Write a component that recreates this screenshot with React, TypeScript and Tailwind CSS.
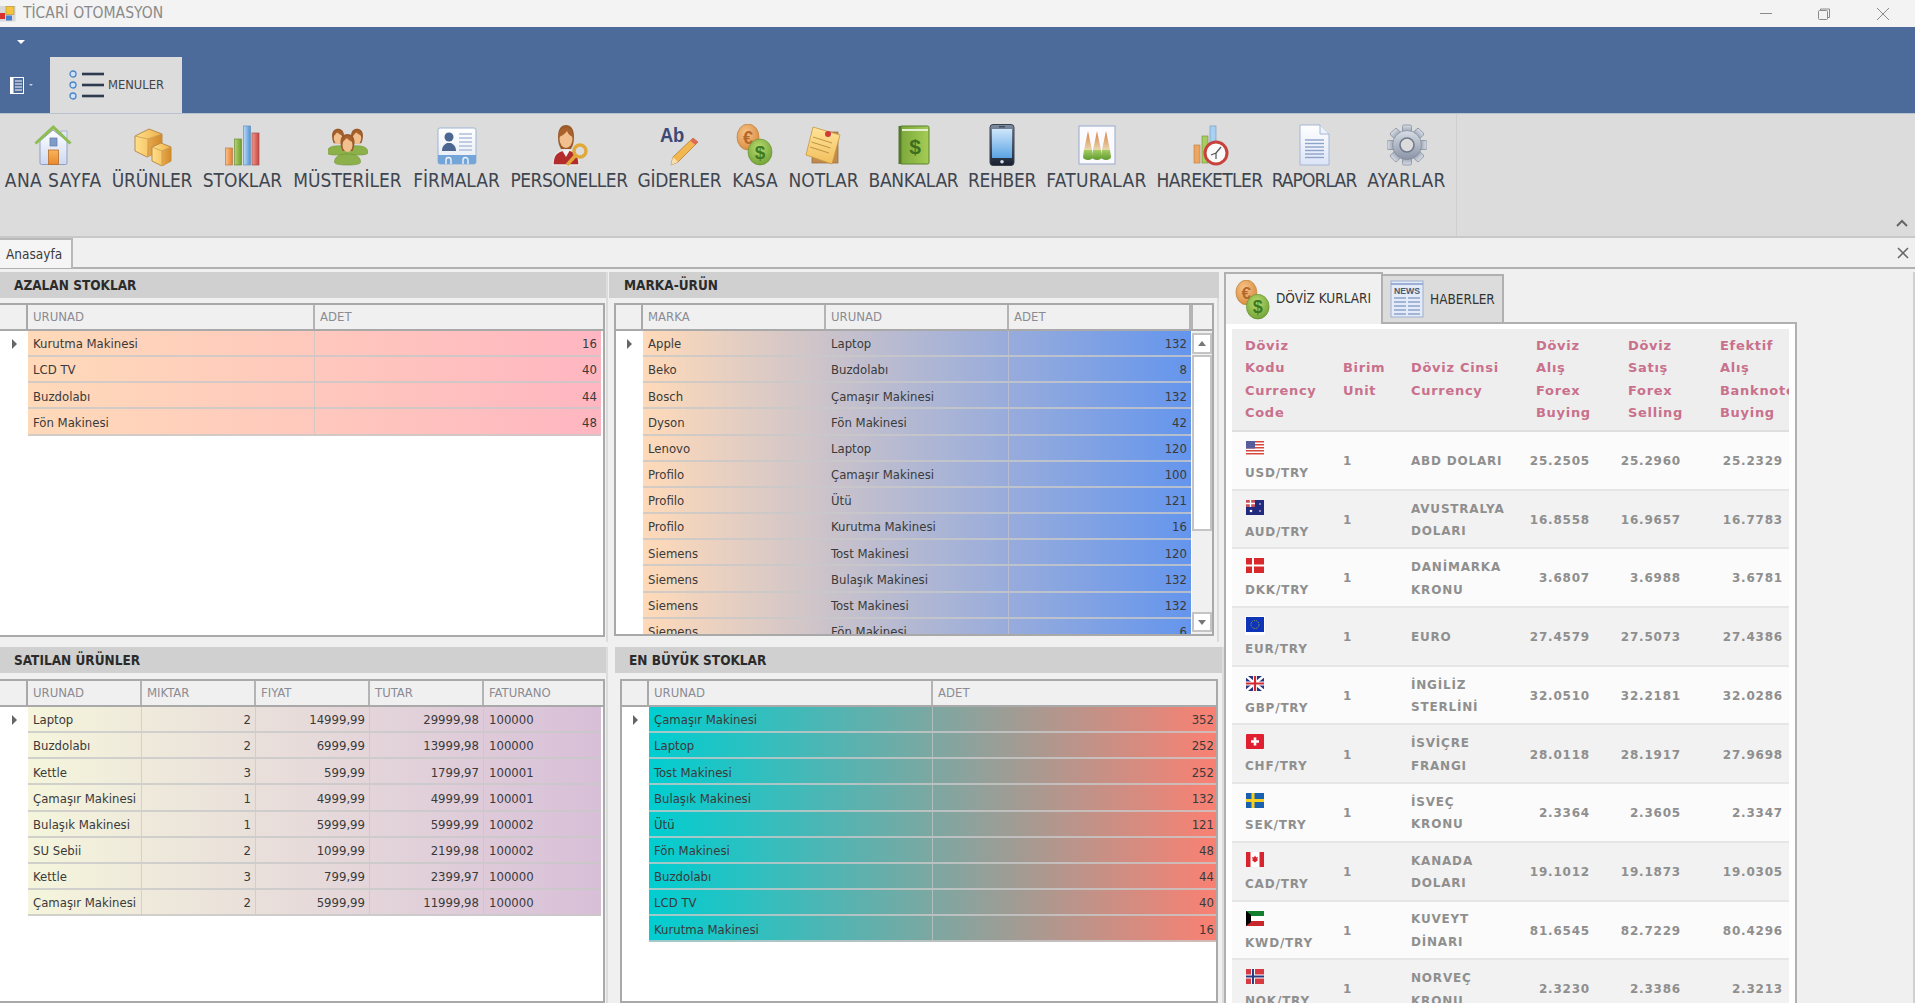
import { ReactNode } from "react";

type Column = { label: string; width: string; right?: boolean };

function Doc({ children, w = 40, h = 42, box = "0 0 40 42", className = "" }: { children: ReactNode; w?: number; h?: number; box?: string; className?: string }) {
  return (
    <svg width={w} height={h} viewBox={box} className={`shrink-0 ${className}`}>
      {children}
    </svg>
  );
}

function Grad({ id, a, b, x = false }: { id: string; a: string; b: string; x?: boolean }) {
  return (
    <linearGradient id={id} x1="0" y1="0" x2={x ? "1" : "0"} y2={x ? "0" : "1"}>
      <stop offset="0" stopColor={a} />
      <stop offset="1" stopColor={b} />
    </linearGradient>
  );
}

function HomeIcon() {
  return (
    <Doc>
      <defs>
        <Grad id="h1" a="#ffffff" b="#cdd8f0" />
        <Grad id="h2" a="#f8b45c" b="#e98a2c" />
      </defs>
      <rect x="28" y="7" width="6" height="12" fill="#dfe6f6" stroke="#a9b6d4" />
      <path d="M7 17 20 6l14 11v22a1.5 1.5 0 0 1-1.5 1.5h-24A1.5 1.5 0 0 1 7 39z" fill="url(#h1)" stroke="#8f9fc4" />
      <rect x="17" y="14" width="7" height="8" fill="#7f9bc8" stroke="#5f78a6" strokeWidth=".7" />
      <rect x="15.5" y="26" width="10" height="14.5" fill="url(#h2)" stroke="#b96c28" strokeWidth=".8" />
      <path d="M2.5 19.5 20.3 3l17.2 16.5" fill="none" stroke="#8fbd51" strokeWidth="3" />
    </Doc>
  );
}

function BoxesIcon() {
  return (
    <Doc>
      <defs>
        <Grad id="b1" a="#ffe08a" b="#eeb04a" x />
        <Grad id="b2" a="#e9a94a" b="#d08a2c" x />
      </defs>
      <path d="M3 12 17 5l13 5v16l-15 7-12-6z" fill="url(#b1)" stroke="#b98a4c" />
      <path d="M16 15 30 10v16l-15 7z" fill="url(#b2)" />
      <path d="M3 12l13 3 14-5M16 15v18" fill="none" stroke="#c99a55" strokeWidth=".8" />
      <path d="M20 23l9-4 10 4v14l-9 5-10-5z" fill="url(#b1)" stroke="#b98a4c" />
      <path d="M30 27l9-4v14l-9 5z" fill="url(#b2)" />
      <path d="M20 23l10 4 9-4M30 27v15" fill="none" stroke="#c99a55" strokeWidth=".8" />
    </Doc>
  );
}

function BarsIcon() {
  return (
    <Doc>
      <defs>
        <Grad id="s1" a="#fbc08a" b="#e2802e" x />
        <Grad id="s2" a="#b4d66f" b="#6e9c2f" x />
        <Grad id="s3" a="#bcdcf6" b="#4d92d4" x />
        <Grad id="s4" a="#ef9a90" b="#c8453e" x />
      </defs>
      <rect x="2.5" y="24" width="7" height="17" fill="url(#s1)" stroke="#b77d4c" strokeWidth=".7" />
      <rect x="11.5" y="15" width="7" height="26" fill="url(#s2)" stroke="#6f8d3f" strokeWidth=".7" />
      <rect x="20.5" y="2" width="7" height="39" fill="url(#s3)" stroke="#6a8fb8" strokeWidth=".7" />
      <rect x="29" y="9" width="7" height="32" fill="url(#s4)" stroke="#a65050" strokeWidth=".7" />
    </Doc>
  );
}

function Person({ x, y, s = 1 }: { x: number; y: number; s?: number }) {
  return (
    <g transform={`translate(${x} ${y}) scale(${s})`}>
      <path d="M-13 23c0-6 6-8 13-8s13 2 13 8c0 2-4 3-13 3s-13-1-13-3z" fill="#8db14a" stroke="#6f9137" strokeWidth=".6" />
      <path d="M-7 3c0-5 3-8 7-8s7 3 7 8c0 4-1 7-2 9H-5c-1-2-2-5-2-9z" fill="#9a5a2a" />
      <ellipse cx="0" cy="6" rx="5" ry="7" fill="#f1c08e" />
      <path d="M-5 3c2-1 3-3 4-4 2 2 4 3 6 4 0-5-2-6-5-6s-5 2-5 6z" fill="#a9622c" />
    </g>
  );
}

function PeopleIcon() {
  return (
    <Doc>
      <Person x={10} y={9} s={0.85} />
      <Person x={29} y={9} s={0.85} />
      <Person x={19.5} y={15} />
    </Doc>
  );
}

function CardIcon() {
  return (
    <Doc>
      <defs>
        <Grad id="c1" a="#ffffff" b="#e4eaf6" />
      </defs>
      <rect x="1" y="4" width="38" height="36" rx="2" fill="url(#c1)" stroke="#9db3d4" />
      <path d="M1 31h38v7a2 2 0 0 1-2 2H3a2 2 0 0 1-2-2z" fill="#73a5d8" />
      <circle cx="12" cy="13" r="4.5" fill="#4b668f" />
      <path d="M5 27c0-5 3-7 5-8h4c2 1 5 3 5 8z" fill="#4b668f" />
      <path d="M22 10h13M22 14h13M22 18h13M22 22h13M22 26h13" stroke="#b0bfd8" strokeWidth="1.4" />
      <path d="M9 40v-4a2.5 2.5 0 0 1 5 0v4M26 40v-4a2.5 2.5 0 0 1 5 0v4" fill="none" stroke="#eef3fb" strokeWidth="1.4" />
    </Doc>
  );
}

function StaffIcon() {
  return (
    <Doc>
      <path d="M4 41c0-10 3-13 11-15h5c7 2 10 5 10 15z" fill="#b32d2d" stroke="#e8e8e8" strokeWidth="1.4" />
      <path d="M13 26l4 7 4-7z" fill="#f2f2f2" />
      <path d="M9 13C9 5 12 1 17 1s8 4 8 12c0 5-1 9-3 12H12c-2-3-3-7-3-12z" fill="#9a5a2a" />
      <ellipse cx="17" cy="15" rx="6.5" ry="9" fill="#f1c08e" />
      <path d="M10 13c3-1 6-3 8-6 1 3 3 5 6 6 0-6-2-9-7-9s-7 3-7 9z" fill="#a9622c" />
      <circle cx="31" cy="27" r="6" fill="none" stroke="#e0a93a" strokeWidth="3.4" />
      <path d="M27 31 18 41" stroke="#e0a93a" strokeWidth="3.4" />
    </Doc>
  );
}

function AbIcon() {
  return (
    <Doc>
      <text x="0" y="18" fontFamily="'Liberation Sans', sans-serif" fontWeight="700" fontSize="21" fill="#3b4a75" textLength="24" lengthAdjust="spacingAndGlyphs">Ab</text>
      <path d="M33 14 38 18 18 38l-7 3 2-8z" fill="#f2b84f" stroke="#a9752b" strokeWidth=".7" />
      <path d="M33 14 38 18 35.5 21 30.5 17z" fill="#e0685a" />
      <path d="M13 33l5 5-7 3z" fill="#f7dfb4" />
    </Doc>
  );
}

function CoinsIcon({ w = 40, h = 42 }: { w?: number; h?: number }) {
  return (
    <Doc w={w} h={h}>
      <defs>
        <radialGradient id="k1" cx=".4" cy=".35" r=".7">
          <stop offset="0" stopColor="#f8c58c" />
          <stop offset="1" stopColor="#d78a3c" />
        </radialGradient>
        <radialGradient id="k2" cx=".45" cy=".35" r=".7">
          <stop offset="0" stopColor="#b9dc70" />
          <stop offset="1" stopColor="#6fa033" />
        </radialGradient>
      </defs>
      <ellipse cx="13" cy="13" rx="11" ry="13" fill="url(#k1)" stroke="#b8762f" strokeWidth=".6" />
      <text x="13" y="20" textAnchor="middle" fontFamily="'Liberation Sans', sans-serif" fontWeight="700" fontSize="18" fill="#b4682a">€</text>
      <ellipse cx="25" cy="28" rx="12" ry="13" fill="url(#k2)" stroke="#5f8c2e" strokeWidth=".6" />
      <text x="25" y="35" textAnchor="middle" fontFamily="'Liberation Sans', sans-serif" fontWeight="700" fontSize="19" fill="#3f7a22">$</text>
    </Doc>
  );
}

function NotesIcon() {
  return (
    <Doc>
      <defs>
        <Grad id="n1" a="#ffe49a" b="#f2bf5c" />
      </defs>
      <rect x="8" y="8" width="26" height="31" fill="#bf8b4e" stroke="#94683a" strokeWidth=".7" />
      <path d="M9 3 36 11 28 40 2 31z" fill="url(#n1)" stroke="#c8953f" strokeWidth=".8" />
      <path d="M9 13l19 6M7.500 18l19 6M6 23l19 6" stroke="#b98c3e" strokeWidth=".9" />
      <circle cx="24" cy="10" r="3" fill="#d23a3a" />
    </Doc>
  );
}

function BookIcon() {
  return (
    <Doc>
      <defs>
        <Grad id="g1" a="#7aa83a" b="#a5cc55" x />
      </defs>
      <rect x="6" y="2" width="29" height="38" rx="1.500" fill="url(#g1)" stroke="#5d8030" />
      <path d="M8 6h26" stroke="#e4eed2" strokeWidth="2" />
      <path d="M6 2v38" stroke="#55782a" strokeWidth="3" />
      <text x="21" y="30" textAnchor="middle" fontFamily="'Liberation Sans', sans-serif" fontWeight="700" fontSize="21" fill="#3f6e1f">$</text>
    </Doc>
  );
}

function PhoneIcon() {
  return (
    <Doc>
      <defs>
        <Grad id="p1" a="#7d8ba0" b="#18202e" />
        <Grad id="p2" a="#cfe6fa" b="#5ba4e4" />
      </defs>
      <rect x="8" y="0.500" width="24" height="41" rx="3" fill="url(#p1)" stroke="#3a4250" />
      <rect x="10" y="5" width="20" height="29" fill="url(#p2)" />
      <path d="M17 2.800h6" stroke="#2b3342" strokeWidth="1" />
      <circle cx="20" cy="37.800" r="1.800" fill="#d8dde4" />
    </Doc>
  );
}

function InvoiceIcon() {
  return (
    <Doc>
      <defs>
        <Grad id="i1" a="#d97b3c" b="#e8d8b0" />
        <Grad id="i2" a="#a4cd62" b="#5f9b2f" />
      </defs>
      <rect x="2" y="2" width="36" height="38" fill="#fbfbff" stroke="#a6b4d2" strokeWidth="1.200" />
      {[11, 20, 29].map((x) => (
        <g key={x}>
          <path d={`M${x} 7 ${x - 4} 26h8z`} fill="url(#i1)" />
          <path d={`M${x - 4} 26h8l1 7a5 3 0 0 1-10 0z`} fill="url(#i2)" />
        </g>
      ))}
    </Doc>
  );
}

function ActivityIcon() {
  return (
    <Doc>
      <rect x="4" y="21" width="6" height="18" fill="#eda660" stroke="#b87a3c" strokeWidth=".6" />
      <rect x="12" y="12" width="6" height="27" fill="#a6cc62" stroke="#6f8f38" strokeWidth=".6" />
      <rect x="20" y="2" width="6" height="22" fill="#a8d0f2" stroke="#6c95bd" strokeWidth=".6" />
      <circle cx="26" cy="29" r="11" fill="#fafafa" stroke="#c8423c" strokeWidth="3" />
      <path d="M26 29l5-6M26 29l-5 2M26 29v6" stroke="#555" strokeWidth="1.200" fill="none" />
    </Doc>
  );
}

function PageIcon() {
  return (
    <Doc>
      <defs>
        <Grad id="d1" a="#ffffff" b="#dbe4f6" />
      </defs>
      <path d="M6 1h20l9 9v31H6z" fill="url(#d1)" stroke="#a6b6d6" />
      <path d="M26 1v9h9" fill="#eef2fa" stroke="#a6b6d6" />
      {[16, 19.500, 23, 26.500, 30, 33.500].map((y) => (
        <path key={y} d={`M11 ${y}h19`} stroke="#8ea2ca" strokeWidth="1.400" />
      ))}
    </Doc>
  );
}

function GearIcon() {
  const teeth = [0, 45, 90, 135, 180, 225, 270, 315];
  return (
    <Doc>
      <defs>
        <Grad id="e1" a="#d8dde5" b="#8a94a5" />
      </defs>
      <g transform="translate(20 21)">
        {teeth.map((t) => (
          <rect key={t} x="-4.500" y="-20" width="9" height="9" rx="1.500" fill="url(#e1)" stroke="#7d8799" strokeWidth=".7" transform={`rotate(${t})`} />
        ))}
        <circle r="14.500" fill="url(#e1)" stroke="#7d8799" strokeWidth=".7" />
        <circle r="7" fill="#dcdcdc" stroke="#6f7a8c" strokeWidth="1.600" />
      </g>
    </Doc>
  );
}

function NewsIcon() {
  return (
    <Doc w={34} h={38} box="0 0 34 38">
      <rect x="1" y="1" width="32" height="36" fill="#e3eaf8" stroke="#9db0d2" />
      <path d="M1 4h32" stroke="#7f97c4" strokeWidth="1.400" />
      <text x="17" y="14" textAnchor="middle" fontFamily="'Liberation Sans', sans-serif" fontWeight="700" fontSize="9.500" fill="#4b5874" textLength="26" lengthAdjust="spacingAndGlyphs">NEWS</text>
      {[18, 22, 26, 30, 34].map((y) => (
        <path key={y} d={`M4 ${y}h12M18 ${y}h12`} stroke="#8ea2ca" strokeWidth="1.600" />
      ))}
    </Doc>
  );
}

function AppLogo() {
  return (
    <Doc w={16} h={17} box="0 0 16 17">
      <rect x="0" y="1" width="15.500" height="15.500" fill="#d8d8d8" />
      <rect x="6" y="1.500" width="8" height="8" fill="#f4c53c" stroke="#b8902a" strokeWidth=".6" />
      <rect x="0" y="8" width="5" height="6" fill="#d8322c" />
      <rect x="6" y="10.500" width="6" height="5" fill="#4a80d0" />
    </Doc>
  );
}

function MenuListIcon() {
  return (
    <Doc w={36} h={30} box="0 0 36 30">
      {[4, 15, 26].map((y) => (
        <g key={y}>
          <circle cx="4" cy={y} r="3" fill="#cfe2f8" stroke="#4b86c8" strokeWidth="1.300" />
          <path d={`M13 ${y}h22`} stroke="#2d3a4f" strokeWidth="2.600" />
        </g>
      ))}
    </Doc>
  );
}

// ribbon buttons keep the reference's uneven widths, the tracking makes up for the other typeface
const nav: [string, string, ReactNode][] = [
  ["ANA SAYFA", "w-[106.500px] tracking-[0.4px]", <HomeIcon />],
  ["ÜRÜNLER", "w-[91px] -tracking-[0.2px]", <BoxesIcon />],
  ["STOKLAR", "w-[90px]", <BarsIcon />],
  ["MÜSTERİLER", "w-[120px]", <PeopleIcon />],
  ["FİRMALAR", "w-[98px]", <CardIcon />],
  ["PERSONELLER", "w-[127px] -tracking-[0.5px]", <StaffIcon />],
  ["GİDERLER", "w-[94px] -tracking-[0.3px]", <AbIcon />],
  ["KASA", "w-[57px]", <CoinsIcon />],
  ["NOTLAR", "w-[80px]", <NotesIcon />],
  ["BANKALAR", "w-[100px] -tracking-[0.3px]", <BookIcon />],
  ["REHBER", "w-[77px] -tracking-[0.3px]", <PhoneIcon />],
  ["FATURALAR", "w-[112px] tracking-[0.3px]", <InvoiceIcon />],
  ["HAREKETLER", "w-[114px] -tracking-[0.6px]", <ActivityIcon />],
  ["RAPORLAR", "w-[95px] -tracking-[0.9px]", <PageIcon />],
  ["AYARLAR", "w-[90px] tracking-[0.3px]", <GearIcon />],
];

function DataGrid({
  columns,
  rows,
  gradient,
  indicator,
  scroll,
  className,
}: {
  columns: Column[];
  rows: string[][];
  gradient: string;
  indicator: string;
  scroll?: boolean;
  className?: string;
}) {
  return (
    <div className={`flex flex-col flex-1 min-h-0 bg-white border-2 border-t-2 border-[#a9a9a9] overflow-hidden ${className ?? ""}`}>
      <div className="flex h-[26px] shrink-0 bg-[#f0f0f0] border-b-2 border-[#a9a9a9] text-[#8b8b93]">
        <div className={`${indicator} shrink-0 border-r-2 border-[#a9a9a9]`} />
        {columns.map((c) => (
          <div key={c.label} className={`${c.width} shrink-0 pl-[5px] flex items-center border-r-2 border-[#b4b4b4] last:border-r-0`}>
            {c.label}
          </div>
        ))}
        {scroll && <div className="flex-1 border-l-2 border-[#b4b4b4]" />}
      </div>
      <div className="flex flex-1 min-h-0">
        <div className="min-w-0 overflow-hidden">
          {rows.map((r, i) => (
            <div key={i} className="flex h-[26.17px]">
              <div className={`${indicator} shrink-0 bg-white flex items-center justify-center`}>
                {i === 0 && <div className="w-0 h-0 border-y-[5px] border-y-transparent border-l-[5px] border-l-[#666]" />}
              </div>
              <div className={`flex border-b-2 border-[#c8c8c8]/80 bg-linear-to-r/srgb ${gradient}`}>
                {columns.map((c, j) => (
                  <div
                    key={c.label}
                    className={`${c.width} shrink-0 pl-[5px] pr-[4px] pt-[2px] flex items-center whitespace-nowrap overflow-hidden border-r border-[#c6c6c6]/70 last:border-r-0 ${c.right ? "justify-end" : ""}`}
                  >
                    {r[j]}
                  </div>
                ))}
              </div>
            </div>
          ))}
        </div>
        {scroll && (
          <div className="w-[20px] ml-[1px] shrink-0 flex flex-col bg-[#f0f0f0] py-[2px]">
            <div className="h-[21px] bg-white border-2 border-[#c4c4c4] flex items-center justify-center">
              <div className="w-0 h-0 border-x-[4px] border-x-transparent border-b-[5px] border-b-[#777]" />
            </div>
            <div className="h-[176px] mt-[1px] bg-white border-2 border-[#c4c4c4]" />
            <div className="flex-1" />
            <div className="h-[20px] bg-white border-2 border-[#c4c4c4] flex items-center justify-center">
              <div className="w-0 h-0 border-x-[4px] border-x-transparent border-t-[5px] border-t-[#777]" />
            </div>
          </div>
        )}
      </div>
    </div>
  );
}

function Panel({ title, className, titleClass, children }: { title: string; className: string; titleClass: string; children: ReactNode }) {
  return (
    <section className={`flex flex-col h-full ${className}`}>
      <h2 className={`h-[26px] shrink-0 bg-[#d0d0d0] flex items-center font-bold text-[13.500px] text-[#2b2b2b] ${titleClass}`}>{title}</h2>
      {children}
    </section>
  );
}

const azalan = [["Kurutma Makinesi", "16"], ["LCD TV", "40"], ["Buzdolabı", "44"], ["Fön Makinesi", "48"]];

const marka = [
  ["Apple", "Laptop", "132"],
  ["Beko", "Buzdolabı", "8"],
  ["Bosch", "Çamaşır Makinesi", "132"],
  ["Dyson", "Fön Makinesi", "42"],
  ["Lenovo", "Laptop", "120"],
  ["Profilo", "Çamaşır Makinesi", "100"],
  ["Profilo", "Ütü", "121"],
  ["Profilo", "Kurutma Makinesi", "16"],
  ["Siemens", "Tost Makinesi", "120"],
  ["Siemens", "Bulaşık Makinesi", "132"],
  ["Siemens", "Tost Makinesi", "132"],
  ["Siemens", "Fön Makinesi", "6"],
];

const satilan = [
  ["Laptop", "2", "14999,99", "29999,98", "100000"],
  ["Buzdolabı", "2", "6999,99", "13999,98", "100000"],
  ["Kettle", "3", "599,99", "1799,97", "100001"],
  ["Çamaşır Makinesi", "1", "4999,99", "4999,99", "100001"],
  ["Bulaşık Makinesi", "1", "5999,99", "5999,99", "100002"],
  ["SU Sebii", "2", "1099,99", "2199,98", "100002"],
  ["Kettle", "3", "799,99", "2399,97", "100000"],
  ["Çamaşır Makinesi", "2", "5999,99", "11999,98", "100000"],
];

const buyuk = [
  ["Çamaşır Makinesi", "352"],
  ["Laptop", "252"],
  ["Tost Makinesi", "252"],
  ["Bulaşık Makinesi", "132"],
  ["Ütü", "121"],
  ["Fön Makinesi", "48"],
  ["Buzdolabı", "44"],
  ["LCD TV", "40"],
  ["Kurutma Makinesi", "16"],
];

const flags: Record<string, ReactNode> = {
  USD: (
    <>
      <rect width="18" height="15" fill="#fff" />
      {[0, 3, 6, 9, 12].map((y) => (
        <rect key={y} y={y} width="18" height="1.500" fill="#d8483f" />
      ))}
      <rect width="9" height="7.500" fill="#565c9c" />
    </>
  ),
  AUD: (
    <>
      <rect width="18" height="15" fill="#222a80" />
      <rect width="9" height="7" fill="#c9505a" />
      <path d="M0 3.500h9M4.500 0v7" stroke="#fff" strokeWidth="1.400" />
      <circle cx="5" cy="11" r="1.300" fill="#fff" />
      <circle cx="14" cy="4" r=".8" fill="#fff" />
      <circle cx="14" cy="11" r=".8" fill="#fff" />
    </>
  ),
  DKK: (
    <>
      <rect width="18" height="15" fill="#d8282c" />
      <path d="M0 7.500h18" stroke="#fff" strokeWidth="2" />
      <path d="M7 0v15" stroke="#fff" strokeWidth="2" />
    </>
  ),
  EUR: (
    <>
      <rect x="-1" y="-1" width="20" height="19" fill="#fff" />
      <rect width="18" height="15" fill="#0e35b8" />
      <circle cx="9" cy="7.500" r="4" fill="none" stroke="#a8b04a" strokeWidth="1" strokeDasharray="1 1.200" />
    </>
  ),
  GBP: (
    <>
      <rect width="18" height="15" fill="#2a3580" />
      <path d="M0 0l18 15M18 0 0 15" stroke="#fff" strokeWidth="2.500" />
      <path d="M9 0v15M0 7.500h18" stroke="#fff" strokeWidth="4" />
      <path d="M9 0v15M0 7.500h18" stroke="#d62830" strokeWidth="2.200" />
    </>
  ),
  CHF: (
    <>
      <rect width="18" height="15" rx="1" fill="#e02030" />
      <path d="M9 3.500v8M5 7.500h8" stroke="#fff" strokeWidth="2.600" />
    </>
  ),
  SEK: (
    <>
      <rect width="18" height="15" fill="#1a60b0" />
      <path d="M0 7.500h18M7 0v15" stroke="#f6d020" strokeWidth="3" />
    </>
  ),
  CAD: (
    <>
      <rect width="18" height="15" fill="#fff" />
      <rect width="4.500" height="15" fill="#d8242c" />
      <rect x="13.500" width="4.500" height="15" fill="#d8242c" />
      <path d="M9 3.500l1.200 2 1.800-.4-.8 2.400 1 .6L9 10.500 5.800 8.100l1-.6L6 5.100l1.800.4z" fill="#d8242c" />
    </>
  ),
  KWD: (
    <>
      <rect width="18" height="5" fill="#12802e" />
      <rect y="5" width="18" height="5" fill="#fff" />
      <rect y="10" width="18" height="5" fill="#c8282c" />
      <path d="M0 0l5 4v7l-5 4z" fill="#000" />
    </>
  ),
  NOK: (
    <>
      <rect width="18" height="15" fill="#d83a44" />
      <path d="M0 7.500h18M7 0v15" stroke="#fff" strokeWidth="4" />
      <path d="M0 7.500h18M7 0v15" stroke="#2a3a80" strokeWidth="2" />
    </>
  ),
};

const rates: [string, string[], string, string, string][] = [
  ["USD", ["ABD DOLARI"], "25.2505", "25.2960", "25.2329"],
  ["AUD", ["AVUSTRALYA", "DOLARI"], "16.8558", "16.9657", "16.7783"],
  ["DKK", ["DANİMARKA", "KRONU"], "3.6807", "3.6988", "3.6781"],
  ["EUR", ["EURO"], "27.4579", "27.5073", "27.4386"],
  ["GBP", ["İNGİLİZ", "STERLİNİ"], "32.0510", "32.2181", "32.0286"],
  ["CHF", ["İSVİÇRE", "FRANGI"], "28.0118", "28.1917", "27.9698"],
  ["SEK", ["İSVEÇ", "KRONU"], "2.3364", "2.3605", "2.3347"],
  ["CAD", ["KANADA", "DOLARI"], "19.1012", "19.1873", "19.0305"],
  ["KWD", ["KUVEYT", "DİNARI"], "81.6545", "82.7229", "80.4296"],
  ["NOK", ["NORVEÇ", "KRONU"], "2.3230", "2.3386", "2.3213"],
];

const rateCols = "grid grid-cols-[98px_68px_125px_92px_92px_82px] items-center";

function Lines({ items }: { items: string[] }) {
  return (
    <div>
      {items.map((t) => (
        <div key={t} className="whitespace-nowrap">
          {t}
        </div>
      ))}
    </div>
  );
}

function RatesTable() {
  return (
    <div className="font-['DejaVu_Sans',sans-serif] font-stretch-normal font-bold leading-[22.5px] overflow-hidden">
      <div className={`${rateCols} h-[103px] bg-[#eeeeee] border-b-2 border-[#dedede] text-[13px] tracking-[0.7px] text-[#c9708c]`}>
        <div className="pl-[13px]"><Lines items={["Döviz", "Kodu", "Currency", "Code"]} /></div>
        <div className="pl-[13px]"><Lines items={["Birim", "Unit"]} /></div>
        <div className="pl-[13px]"><Lines items={["Döviz Cinsi", "Currency"]} /></div>
        <div className="pl-[13px]"><Lines items={["Döviz", "Alış", "Forex", "Buying"]} /></div>
        <div className="pl-[13px]"><Lines items={["Döviz", "Satış", "Forex", "Selling"]} /></div>
        <div className="pl-[13px] overflow-hidden"><Lines items={["Efektif", "Alış", "Banknote", "Buying"]} /></div>
      </div>
      {rates.map(([code, name, buy, sell, cash], i) => (
        <div key={code} className={`${rateCols} h-[58.7px] pt-[2px] border-b-2 border-[#e6e6e6] text-[12px] tracking-[0.8px] text-[#8f8f8f] ${i % 2 ? "bg-[#f2f2f2]" : "bg-[#fbfbfb]"}`}>
          <div className="pl-[13px] self-start pt-[7px]">
            <svg width="18" height="15" viewBox="0 0 18 15" className="block mb-[6px] ml-[1px] overflow-visible">{flags[code]}</svg>
            <div>{code}/TRY</div>
          </div>
          <div className="pl-[13px]">1</div>
          <div className="pl-[13px]"><Lines items={name} /></div>
          <div className="text-right pr-[25px]">{buy}</div>
          <div className="text-right pr-[26px]">{sell}</div>
          <div className="text-right pr-[6px]">{cash}</div>
        </div>
      ))}
    </div>
  );
}

export default function App() {
  return (
    <div className="w-[1915px] h-[1003px] overflow-hidden flex flex-col bg-[#f0f0f0] font-['DejaVu_Sans',sans-serif] font-stretch-condensed text-[13px] text-[#3a3a3a]">
      {/* title bar */}
      <header className="h-[27px] shrink-0 bg-[#f3f3f3] flex items-center">
        <AppLogo />
        <span className="ml-[7px] text-[15.500px] text-[#8a8a8a]">TİCARİ OTOMASYON</span>
        <div className="ml-auto flex items-center text-[#8a8a8a]">
          <svg width="12" height="12" viewBox="0 0 12 12" className="mr-[46px]"><path d="M0 5.500h12" stroke="currentColor" /></svg>
          <svg width="12" height="12" viewBox="0 0 12 12" className="mr-[47px]"><path d="M2.500 2.500V1h9v8.500H10" fill="none" stroke="currentColor" /><rect x=".5" y="2.500" width="9" height="9" rx="1" fill="#f3f3f3" stroke="currentColor" /></svg>
          <svg width="12" height="12" viewBox="0 0 12 12" className="mr-[26px]"><path d="M0 0l12 12M12 0 0 12" stroke="currentColor" /></svg>
        </div>
      </header>

      {/* ribbon tabs */}
      <div className="h-[87px] shrink-0 bg-[#4c6b9a] flex flex-col border-b border-[#b9c2cf]">
        <div className="h-[30px] pl-[17px] pt-[13px]">
          <div className="w-0 h-0 border-x-[4px] border-x-transparent border-t-[4px] border-t-white" />
        </div>
        <div className="flex flex-1 items-end">
          <div className="h-[56px] w-[50px] flex items-center pl-[10px] gap-[3px]">
            <svg width="16" height="17" viewBox="0 0 16 17">
              <rect x=".5" y=".5" width="13" height="16" fill="#4c6b9a" stroke="#fff" />
              <path d="M0 1h3.500v15H0z" fill="#fff" />
              <path d="M5 4h7M5 7h7M5 10h7M5 13h7" stroke="#fff" />
            </svg>
            <div className="w-0 h-0 border-x-[2px] border-x-transparent border-t-[2px] border-t-[#c8d2e0]" />
          </div>
          <div className="h-[56px] w-[132px] bg-[#dcdcdc] flex items-center pl-[19px] gap-[3px] text-[12.800px] text-[#444]">
            <MenuListIcon />
            MENULER
          </div>
        </div>
      </div>

      {/* ribbon items */}
      <nav className="h-[124px] shrink-0 bg-[#dcdcdc] flex border-b-2 border-[#c8c8c8]">
        <div className="w-[1457px] border-r border-[#cfcfcf] flex items-start pt-[10px]">
          {nav.map(([label, width, icon]) => (
            <div key={label} className={`${width} shrink-0 flex flex-col items-center text-[19px] leading-[24px] text-[#3f4650] whitespace-nowrap`}>
              <div className="h-[42px] flex items-center">{icon}</div>
              <span className="mt-[2px]">{label}</span>
            </div>
          ))}
        </div>
        <div className="flex-1 flex items-end justify-end pr-[7px] pb-[9px]">
          <svg width="12" height="8" viewBox="0 0 12 8"><path d="M1 7l5-5 5 5" fill="none" stroke="#666" strokeWidth="2" /></svg>
        </div>
      </nav>

      {/* document tabs */}
      <div className="h-[31px] shrink-0 bg-[#f0f0f0] flex border-b-2 border-[#b0b0b0]">
        <div className="w-[73px] h-[30px] -mb-[1px] bg-[#f5f5f5] border-r-2 border-t-2 border-[#b8b8b8] flex items-center pl-[6px] text-[13.500px]">Anasayfa</div>
        <div className="ml-auto pr-[6px] flex items-center">
          <svg width="12" height="12" viewBox="0 0 12 12"><path d="M1 1l10 10M11 1 1 11" stroke="#666" strokeWidth="1.500" /></svg>
        </div>
      </div>

      {/* body */}
      <main className="flex-1 min-h-0 flex overflow-hidden pt-[3px]">
        <div className="w-[1224px] shrink-0 flex flex-col">
          <div className="h-[370px] shrink-0 flex">
            <Panel title="AZALAN STOKLAR" className="w-[608px] border-r-2 border-[#dcdcdc]" titleClass="pl-[14px]">
              <div className="flex flex-col flex-1 min-h-0 pt-[5px] pb-[5px] pr-[1px]">
                <DataGrid
                  className="border-l-0"
                  gradient="from-[#ffdab9] to-[#ffb6c1]"
                  indicator="w-[28px]"
                  columns={[
                    { label: "URUNAD", width: "w-[287px]" },
                    { label: "ADET", width: "w-[286px]", right: true },
                  ]}
                  rows={azalan}
                />
              </div>
            </Panel>
            <Panel title="MARKA-ÜRÜN" className="w-[610px] ml-[1px]" titleClass="pl-[15px]">
              <div className="flex flex-col flex-1 min-h-0 pt-[5px] pb-[6px] pl-[5px] pr-[3px] border-r-2 border-[#dcdcdc]">
                <DataGrid
                  gradient="from-[#ffdab9] to-[#6495ed]"
                  indicator="w-[27px]"
                  scroll
                  columns={[
                    { label: "MARKA", width: "w-[183px]" },
                    { label: "URUNAD", width: "w-[183px]" },
                    { label: "ADET", width: "w-[182px]", right: true },
                  ]}
                  rows={marka}
                />
              </div>
            </Panel>
          </div>
          <div className="flex-1 min-h-0 flex pt-[5px]">
            <Panel title="SATILAN ÜRÜNLER" className="w-[608px] border-r-2 border-[#dcdcdc]" titleClass="pl-[14px]">
              <div className="flex flex-col flex-1 min-h-0 pt-[6px] pr-[1px]">
                <DataGrid
                  className="border-l-0"
                  gradient="from-[#f5f5dc] to-[#d8bfd8]"
                  indicator="w-[28px]"
                  columns={[
                    { label: "URUNAD", width: "w-[114px]" },
                    { label: "MIKTAR", width: "w-[114px]", right: true },
                    { label: "FIYAT", width: "w-[114px]", right: true },
                    { label: "TUTAR", width: "w-[114px]", right: true },
                    { label: "FATURANO", width: "w-[117px]" },
                  ]}
                  rows={satilan}
                />
              </div>
            </Panel>
            <Panel title="EN BÜYÜK STOKLAR" className="w-[609px] ml-[7px] border-r-2 border-[#dcdcdc]" titleClass="pl-[14px]">
              <div className="flex flex-col flex-1 min-h-0 pt-[6px] pl-[5px] pr-[4px]">
                <DataGrid
                  gradient="from-[#00ced1] to-[#fa8072]"
                  indicator="w-[27px]"
                  columns={[
                    { label: "URUNAD", width: "w-[284px]" },
                    { label: "ADET", width: "w-[285px]", right: true },
                  ]}
                  rows={buyuk}
                />
              </div>
            </Panel>
          </div>
        </div>

        {/* exchange rates */}
        <div className="flex-1 min-w-0 flex flex-col border-r-2 border-[#d0d0d0]">
          <div className="w-[573px] h-[52px] shrink-0 flex items-start text-[13.500px] text-[#333]">
            <div className="w-[159px] h-[53px] bg-[#f0f0f0] border-2 border-b-0 border-[#b0b0b0] flex items-center pl-[8px] gap-[2px]">
              <CoinsIcon w={38} h={40} />
              <span className="ml-[2px] -mt-[3px]">DÖVİZ KURLARI</span>
            </div>
            <div className="w-[121px] h-[50px] mt-[2px] bg-[#dcdcdc] border-2 border-l-0 border-[#b0b0b0] flex items-center pl-[7px] gap-[6px]">
              <NewsIcon />
              HABERLER
            </div>
            <div className="flex-1 h-[52px] border-b-2 border-[#b0b0b0]" />
          </div>
          <div className="w-[573px] flex-1 min-h-0 bg-white border-x-2 border-[#b0b0b0] pl-[6px] pr-[6px] pt-[5px] overflow-hidden">
            <RatesTable />
          </div>
        </div>
      </main>
    </div>
  );
}
